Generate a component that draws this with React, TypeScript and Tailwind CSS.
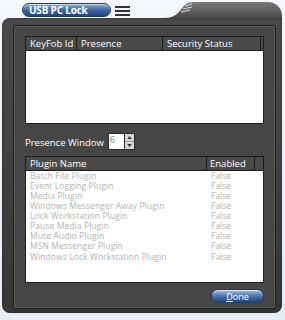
import React from "react";

const plugins = [
  "Batch File Plugin",
  "Event Logging Plugin",
  "Media Plugin",
  "Windows Messenger Away Plugin",
  "Lock Workstation Plugin",
  "Pause Media Plugin",
  "Mute Audio Plugin",
  "MSN Messenger Plugin",
  "Windows Lock Workstation Plugin",
];

export default function App() {
  return (
    <div
      className="w-[285px] h-[320px] overflow-hidden bg-gradient-to-b from-[#f4f7fb] to-[#e6edf5] flex flex-col"
      style={{ fontFamily: '"Open Sans", "Noto Sans", sans-serif' }}
    >
      {/* top strip */}
      <div className="h-[18px] flex items-start relative">
        <div className="ml-[22px] mt-[3px] w-[89px] h-[14px] rounded-full border border-[#1d3c6e] bg-gradient-to-b from-[#8fb0dc] via-[#3f679f] to-[#24467a] shadow-[inset_0_1px_0_rgba(255,255,255,0.6)] flex items-center pl-[6px]">
          <span className="text-white text-[10px] font-bold leading-none tracking-[-0.2px]">USB PC Lock</span>
        </div>
        <div className="ml-[4px] mt-[6px] w-[15px] flex flex-col gap-[2px]">
          <div className="h-[2px] bg-[#333]" />
          <div className="h-[2px] bg-[#333]" />
          <div className="h-[2px] bg-[#333]" />
        </div>
        <div className="ml-auto mr-[3px] mt-[2px] flex items-stretch h-[16px]">
          <svg width="32" height="16" viewBox="0 0 32 16" className="block">
            <defs>
              <linearGradient id="tabg" x1="0" y1="0" x2="0" y2="1">
                <stop offset="0" stopColor="#7a7a7a" />
                <stop offset="1" stopColor="#4a4a4a" />
              </linearGradient>
            </defs>
            <path d="M0 16 C10 16 14 10 18 5 C21 1 24 0 32 0 L32 16 Z" fill="url(#tabg)" />
            <path d="M20 4 L27 2 M18 7 L27 5 M16 10 L25 8" stroke="#d8d8d8" strokeWidth="1.2" />
          </svg>
          <div className="w-[85px] rounded-tr-[14px] bg-gradient-to-b from-[#7a7a7a] to-[#4a4a4a]" />
        </div>
      </div>

      {/* window body */}
      <div className="ml-[2px] mr-[3px] h-[295px] rounded-tl-[8px] rounded-b-[8px] bg-gradient-to-b from-[#4a4a4a] to-[#363636] shadow-[inset_0_0_2px_rgba(0,0,0,0.6)] pt-[7px] px-[11px] pb-[4px] flex">
        <div className="flex-1 border border-[#1f1f1f] shadow-[inset_0_0_0_1px_#5a5a5a] bg-[#464646] rounded-[2px] px-[11px] pt-[10px] flex flex-col">
          {/* table 1 */}
          <div className="w-[239px] h-[88px] border border-[#1c1c1c] flex flex-col">
            <div className="h-[14px] flex bg-[#4a4a4a] border-b border-[#1c1c1c] text-white text-[9.5px] leading-none">
              <div className="w-[51px] border-r border-[#1c1c1c] pl-[4px] flex items-center">KeyFob Id</div>
              <div className="w-[86px] border-r border-[#1c1c1c] pl-[4px] flex items-center">Presence</div>
              <div className="w-[98px] border-r border-[#1c1c1c] pl-[4px] flex items-center">Security Status</div>
              <div className="flex-1" />
            </div>
            <div className="flex-1 bg-white" />
          </div>

          {/* presence window */}
          <div className="mt-[9px] h-[17px] flex items-center">
            <span className="text-white text-[9.5px] leading-none mt-[2px]">Presence Window</span>
            <div className="ml-[4px] w-[17px] h-[17px] bg-white border border-[#2a2a2a] text-[#777] text-[9px] leading-none pl-[1px] pt-[1px]">6</div>
            <div className="w-[10px] h-[17px] bg-[#d6d6d6] border border-[#2a2a2a] border-l-0 flex flex-col">
              <div className="flex-1 flex items-center justify-center border-b border-[#9a9a9a]">
                <svg width="5" height="3" viewBox="0 0 6 4"><path d="M0 4 L3 0 L6 4 Z" fill="#333" /></svg>
              </div>
              <div className="flex-1 flex items-center justify-center">
                <svg width="5" height="3" viewBox="0 0 6 4"><path d="M0 0 L3 4 L6 0 Z" fill="#333" /></svg>
              </div>
            </div>
          </div>

          {/* table 2 */}
          <div className="mt-[6px] w-[239px] h-[127px] border border-[#1c1c1c] flex flex-col">
            <div className="h-[14px] flex bg-[#4a4a4a] border-b border-[#1c1c1c] text-white text-[9.5px] leading-none">
              <div className="w-[181px] border-r border-[#1c1c1c] pl-[4px] flex items-center">Plugin Name</div>
              <div className="w-[48px] border-r border-[#1c1c1c] pl-[3px] flex items-center">Enabled</div>
              <div className="flex-1" />
            </div>
            <div className="flex-1 bg-white pt-[0px] flex flex-col">
              {plugins.map((p) => (
                <div key={p} className="h-[10.1px] flex items-center text-[#b3b3b3] text-[8.5px] leading-none">
                  <div className="w-[182px] pl-[4px] whitespace-nowrap tracking-[0.1px]">{p}</div>
                  <div className="pl-[3px]">False</div>
                </div>
              ))}
            </div>
          </div>

          {/* done */}
          <div className="mt-[6px] flex justify-end">
            <div className="w-[53px] h-[14px] rounded-full border border-[#203c66] bg-gradient-to-b from-[#a9c3e6] via-[#4c74ad] to-[#23487d] shadow-[inset_0_1px_0_rgba(255,255,255,0.6)] flex items-center justify-center">
              <span className="text-white text-[9px] leading-none">
                <span className="underline">D</span>one
              </span>
            </div>
          </div>
        </div>
      </div>
    </div>
  );
}
